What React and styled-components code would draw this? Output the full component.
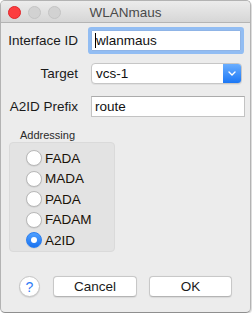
import React from "react";
import styled, { createGlobalStyle } from "styled-components";

const Global = createGlobalStyle`
  html, body { margin: 0; padding: 0; background: #ffffff; }
  body { font-family: "Liberation Sans", Arial, sans-serif; }
  * { box-sizing: border-box; }
`;

const Window = styled.div`
  width: 251px;
  height: 313px;
  background: #ececec;
  border: 1px solid #b3b3b3;
  border-bottom-color: #8f8f8f;
  border-radius: 5px;
  overflow: hidden;
  display: flex;
  flex-direction: column;
  box-shadow: 1px 1px 1px rgba(0,0,0,0.15);
`;

const TitleBar = styled.div`
  height: 22px;
  flex: none;
  background: linear-gradient(#ececec, #d6d6d6);
  border-bottom: 1px solid #b4b4b4;
  display: grid;
  grid-template-columns: 1fr auto 1fr;
  align-items: center;
`;

const Lights = styled.div`
  display: flex;
  gap: 7px;
  padding-left: 7px;
  padding-top: 1px;
`;

const Light = styled.span`
  width: 13px;
  height: 13px;
  border-radius: 50%;
  background: ${p => (p.$active ? "#fc3d3f" : "#d2d2d2")};
  border: 1px solid ${p => (p.$active ? "#e0252a" : "#c4c4c4")};
`;

const Title = styled.div`
  font-size: 13.5px;
  color: #4a4a4a;
  padding-top: 1px;
`;

const Body = styled.div`
  flex: 1;
  display: flex;
  flex-direction: column;
`;

const Form = styled.div`
  margin-top: 7px;
  padding-left: 7px;
  display: grid;
  grid-template-columns: 70px auto;
  column-gap: 13px;
  row-gap: 12px;
  grid-auto-rows: 21px;
  align-items: center;
`;

const Label = styled.div`
  font-size: 13.5px;
  color: #1a1a1a;
  text-align: right;
  white-space: nowrap;
`;

const TextField = styled.div`
  width: ${p => p.$w}px;
  height: 21px;
  background: #fff;
  border: 1px solid ${p => (p.$focused ? "#8fb4e6" : "#c3c3c3")};
  border-top-color: ${p => (p.$focused ? "#8fb4e6" : "#ababab")};
  box-shadow: ${p => (p.$focused ? "0 0 0 3px #92bdf3" : "none")};
  border-radius: ${p => (p.$focused ? "1px" : "0")};
  font-size: 13.5px;
  color: #111;
  padding-left: 3px;
  display: flex;
  align-items: center;
`;

const Caret = styled.span`
  display: inline-block;
  width: 1px;
  height: 15px;
  background: #000;
`;

const Select = styled.div`
  width: 151px;
  height: 21px;
  background: #fff;
  border: 1px solid #c6c6c6;
  border-radius: 4px;
  display: flex;
  align-items: stretch;
  font-size: 13.5px;
  color: #111;
  overflow: hidden;
  box-shadow: 0 1px 0 rgba(0,0,0,0.05);
`;

const SelectText = styled.div`
  flex: 1;
  display: flex;
  align-items: center;
  padding-left: 4px;
`;

const SelectButton = styled.div`
  width: 18px;
  background: linear-gradient(#6aaeff, #1b77f5);
  display: flex;
  align-items: center;
  justify-content: center;
`;

const GroupLabel = styled.div`
  margin-top: 12px;
  padding-left: 19px;
  font-size: 11px;
  line-height: 13px;
  color: #2a2a2a;
`;

const Group = styled.div`
  margin-left: 8px;
  width: 106px;
  height: 110px;
  background: #e3e3e3;
  border: 1px solid #dadada;
  border-radius: 4px;
  padding: 7px 0 0 16px;
  display: flex;
  flex-direction: column;
  gap: 4.6px;
`;

const RadioRow = styled.div`
  display: flex;
  align-items: center;
  gap: 3px;
  height: 16px;
  font-size: 13.5px;
  color: #1a1208;
`;

const RadioCircle = styled.span`
  width: 16px;
  height: 16px;
  border-radius: 50%;
  flex: none;
  display: flex;
  align-items: center;
  justify-content: center;
  background: ${p => (p.$checked ? "linear-gradient(#4fa0ff, #1a72f0)" : "#fff")};
  border: 1px solid ${p => (p.$checked ? "#2a7ef0" : "#b9b9b9")};
  box-shadow: 0 0.5px 1px rgba(0,0,0,0.12);
`;

const Dot = styled.span`
  width: 6px;
  height: 6px;
  border-radius: 50%;
  background: #fff;
`;

const ButtonRow = styled.div`
  margin-top: 24px;
  padding-left: 18px;
  display: flex;
  align-items: center;
  gap: 12px;
`;

const Help = styled.div`
  width: 21px;
  height: 21px;
  border-radius: 50%;
  background: #fff;
  border: 1px solid #c4c4c4;
  box-shadow: 0 1px 1px rgba(0,0,0,0.1);
  color: #2f7cf6;
  font-size: 14px;
  display: flex;
  align-items: center;
  justify-content: center;
  margin-right: 1px;
`;

const Button = styled.div`
  width: ${p => p.$w}px;
  height: 21px;
  background: #fff;
  border: 1px solid #c8c8c8;
  border-bottom-color: #b4b4b4;
  border-radius: 4px;
  font-size: 13.5px;
  color: #1a1a1a;
  display: flex;
  align-items: center;
  justify-content: center;
  box-shadow: 0 0.5px 1px rgba(0,0,0,0.08);
`;

const options = ["FADA", "MADA", "PADA", "FADAM", "A2ID"];

export default function App() {
  return (
    <>
      <Global />
      <Window>
        <TitleBar>
          <Lights>
            <Light $active />
            <Light />
            <Light />
          </Lights>
          <Title>WLANmaus</Title>
          <div />
        </TitleBar>
        <Body>
          <Form>
            <Label>Interface ID</Label>
            <TextField $w={150} $focused>
              <Caret />wlanmaus
            </TextField>
            <Label>Target</Label>
            <Select>
              <SelectText>vcs-1</SelectText>
              <SelectButton>
                <svg width="8" height="5" viewBox="0 0 8 5">
                  <path d="M1 1 L4 4 L7 1" fill="none" stroke="#fff" strokeWidth="1.4" strokeLinecap="round" strokeLinejoin="round" />
                </svg>
              </SelectButton>
            </Select>
            <Label>A2ID Prefix</Label>
            <TextField $w={154}>route</TextField>
          </Form>
          <GroupLabel>Addressing</GroupLabel>
          <Group>
            {options.map(o => (
              <RadioRow key={o}>
                <RadioCircle $checked={o === "A2ID"}>{o === "A2ID" && <Dot />}</RadioCircle>
                {o}
              </RadioRow>
            ))}
          </Group>
          <ButtonRow>
            <Help>?</Help>
            <Button $w={84}>Cancel</Button>
            <Button $w={83}>OK</Button>
          </ButtonRow>
        </Body>
      </Window>
    </>
  );
}
